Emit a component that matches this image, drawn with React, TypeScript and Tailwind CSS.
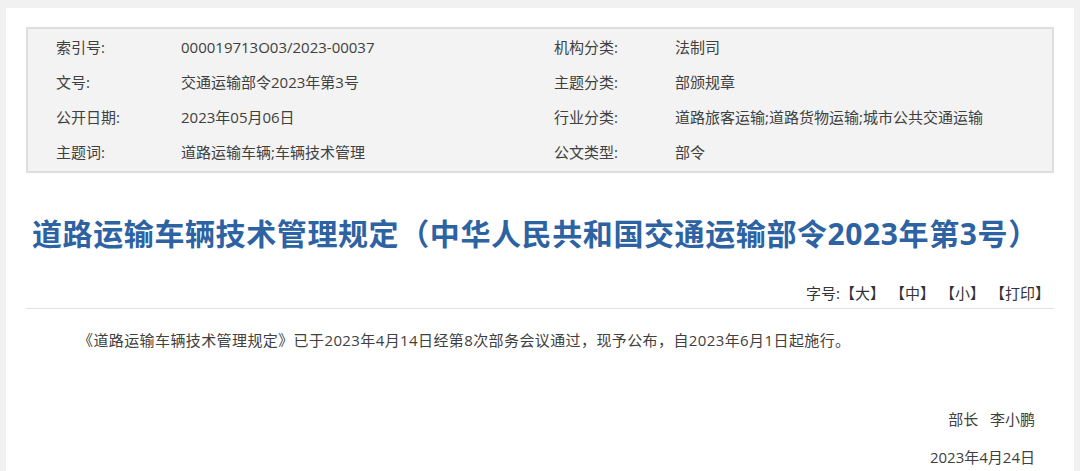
import React from "react";

const font = { fontFamily: '"Open Sans", "Noto Sans CJK SC", sans-serif' };

const rows: [string, string, string, string][] = [
  ["索引号:", "000019713O03/2023-00037", "机构分类:", "法制司"],
  ["文号:", "交通运输部令2023年第3号", "主题分类:", "部颁规章"],
  ["公开日期:", "2023年05月06日", "行业分类:", "道路旅客运输;道路货物运输;城市公共交通运输"],
  ["主题词:", "道路运输车辆;车辆技术管理", "公文类型:", "部令"],
];

export default function App() {
  return (
    <div
      className="min-h-[471px] w-[1080px] bg-[#f1f1f1] pl-[6px] pt-[8px] overflow-hidden [text-spacing-trim:space-all]"
      style={font}
    >
      <div className="w-[1068px] min-h-[463px] bg-white px-[20px] pt-[19px]">
        <div className="border-2 border-[#dedede] bg-[#f3f3f3] py-[1px] text-[15px] text-[#404040]">
          {rows.map((r, i) => (
            <div key={i} className="flex h-[35px] items-center">
              <div className="w-[28px]" />
              <div className="w-[125px]">{r[0]}</div>
              <div className="w-[373px]">{r[1]}</div>
              <div className="w-[121px]">{r[2]}</div>
              <div className="flex-1">{r[3]}</div>
            </div>
          ))}
        </div>
        <h1 className="mt-[41px] pl-[6px] text-[30px] font-bold leading-[40px] tracking-[0.6px] text-[#2d62a3]">
          道路运输车辆技术管理规定（中华人民共和国交通运输部令2023年第3号）
        </h1>
        <div className="mt-[27px] flex justify-end border-b border-[#e3e3e3] pb-[3px] pr-[4px] text-[15px] leading-[24px] text-[#333]">
          <span>字号:</span>
          <span>【大】</span>
          <span className="ml-[5px]">【中】</span>
          <span className="ml-[5px]">【小】</span>
          <span className="ml-[5px]">【打印】</span>
        </div>
        <p className="mt-[19px] pl-[52px] text-[15px] leading-[24px] tracking-[0.4px] text-[#404040]">
          《道路运输车辆技术管理规定》已于2023年4月14日经第8次部务会议通过，现予公布，自2023年6月1日起施行。
        </p>
        <div className="mt-[55px] pr-[19px] text-right text-[15px] leading-[24px] text-[#404040]">
          部长&nbsp;&nbsp;&nbsp;李小鹏
        </div>
        <div className="mt-[14px] pr-[19px] text-right text-[15px] leading-[24px] text-[#404040]">
          2023年4月24日
        </div>
      </div>
    </div>
  );
}
